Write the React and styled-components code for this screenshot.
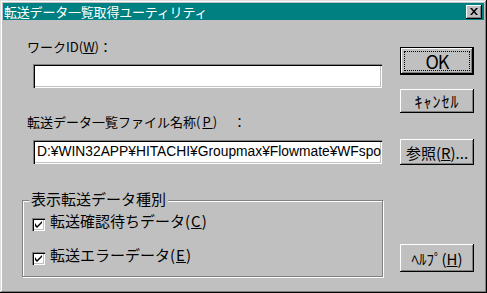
import React from 'react';
import styled, { createGlobalStyle } from 'styled-components';

const Face = '#c0c0c0';
const Shadow = '#808080';
const Teal = '#008080';
const JP = '"Noto Sans CJK JP", "Liberation Sans", sans-serif';

const Global = createGlobalStyle`
  html, body { margin: 0; padding: 0; background: ${Face}; }
  body { font-family: ${JP}; font-size: 13px; color: #000; }
`;

const Window = styled.div`
  width: 487px;
  height: 293px;
  box-sizing: border-box;
  padding: 3px;
  background: ${Face};
  box-shadow: inset -1px -1px #000, inset 1px 1px #dfdfdf, inset -2px -2px ${Shadow}, inset 2px 2px #fff;
  display: flex;
  flex-direction: column;
`;

const TitleBar = styled.div`
  height: 17px;
  background: ${Teal};
  display: flex;
  align-items: center;
  justify-content: space-between;
  padding: 0 2px 0 1px;
`;

const TitleText = styled.span`
  color: #fff;
  font-size: 13px;
  line-height: 17px;
  letter-spacing: -0.2px;
`;

const CloseBox = styled.div`
  width: 16px;
  height: 14px;
  box-sizing: border-box;
  background: ${Face};
  box-shadow: inset -1px -1px #000, inset 1px 1px #fff, inset -2px -2px ${Shadow};
  display: flex;
  align-items: center;
  justify-content: center;
`;

const Body = styled.div`
  display: flex;
  padding-left: 19px;
  gap: 16px;
`;

const LeftCol = styled.div`
  width: 362px;
  display: flex;
  flex-direction: column;
`;

const RightCol = styled.div`
  width: 74px;
  display: flex;
  flex-direction: column;
`;

const Label = styled.div`
  margin: ${p => p.$top}px 0 0 5px;
  line-height: 15px;
  height: 15px;
  white-space: nowrap;
`;

const Paren = styled.span`
  letter-spacing: ${p => p.$sp}px;
  margin-right: ${p => p.$gap || 0}px;
`;

const TextBox = styled.div`
  margin: ${p => p.$top}px 0 0 11px;
  width: 349px;
  height: 24px;
  box-sizing: border-box;
  background: #fff;
  box-shadow: inset 1px 1px ${Shadow}, inset 2px 2px #000, inset -1px -1px #fff, inset -2px -2px ${Face};
  padding: 0 3px 0 4px;
  overflow: hidden;
  white-space: nowrap;
  font-family: "Liberation Sans", Arial, sans-serif;
  font-size: 13.8px;
  line-height: 24px;
`;

const Group = styled.div`
  position: relative;
  margin: ${p => p.$top}px 0 0 0;
  width: 361px;
  height: 77px;
  box-sizing: border-box;
  border: 1px solid ${Shadow};
  box-shadow: inset 1px 1px #fff, 1px 1px #fff;
  padding: 11px 0 0 9px;
  display: flex;
  flex-direction: column;
  font-size: 15px;
`;

const Legend = styled.div`
  position: absolute;
  left: 6px;
  top: -10px;
  padding: 0 2px;
  background: ${Face};
  line-height: 16px;
  height: 16px;
  white-space: nowrap;
`;

const CheckRow = styled.div`
  display: flex;
  align-items: flex-start;
  gap: 5px;
  height: 17px;
  line-height: 17px;
  margin-top: ${p => p.$top}px;
  white-space: nowrap;
`;

const CheckBox = styled.div`
  margin-top: 6px;
  width: 13px;
  height: 13px;
  box-sizing: border-box;
  background: #fff;
  box-shadow: inset 1px 1px ${Shadow}, inset 2px 2px #000, inset -1px -1px #fff, inset -2px -2px ${Face};
  display: flex;
  align-items: center;
  justify-content: center;
`;

const Button = styled.div`
  margin-top: ${p => p.$top}px;
  height: ${p => p.$h}px;
  box-sizing: border-box;
  background: ${Face};
  display: flex;
  align-items: center;
  justify-content: center;
  white-space: nowrap;
  font-size: ${p => p.$size || 15}px;
  letter-spacing: ${p => p.$sp || 0}px;
  box-shadow: ${p => p.$default
    ? `inset -1px -1px #000, inset 1px 1px #000, inset -2px -2px #000, inset 2px 2px #fff, inset -3px -3px ${Shadow}`
    : `inset -1px -1px #000, inset 1px 1px #fff, inset -2px -2px ${Shadow}`};
  position: relative;
`;

const Focus = styled.div`
  position: absolute;
  inset: 4px;
  border: 1px dotted #000;
`;

const Key = styled.span`
  text-decoration: underline;
`;

const Check = () => (
  <svg width="9" height="9" viewBox="0 0 9 9">
    <path d="M1 3v3l2 2l5-5v-2l-5 5z" fill="#000" />
  </svg>
);

export default function App() {
  return (
    <Window>
      <Global />
      <TitleBar>
        <TitleText>転送データ一覧取得ユーティリティ</TitleText>
        <CloseBox>
          <svg width="8" height="7" viewBox="0 0 8 7">
            <path d="M0 0h2l2 2.5l2-2.5h2l-3 3.5l3 3.5h-2l-2-2.5l-2 2.5h-2l3-3.5z" fill="#000" />
          </svg>
        </CloseBox>
      </TitleBar>
      <Body>
        <LeftCol>
          <Label $top={19}>ワークID(<Key>W</Key>)：</Label>
          <TextBox $top={10} />
          <Label $top={26}>
            転送データ一覧ファイル名称<Paren $sp={2} $gap={14}>(<Key>P</Key>)</Paren>：
          </Label>
          <TextBox $top={11}>D:¥WIN32APP¥HITACHI¥Groupmax¥Flowmate¥WFspo</TextBox>
          <Group $top={36}>
            <Legend>表示転送データ種別</Legend>
            <CheckRow $top={0}>
              <CheckBox><Check /></CheckBox>
              <span>転送確認待ちデータ<Paren $sp={1}>(<Key>C</Key>)</Paren></span>
            </CheckRow>
            <CheckRow $top={17}>
              <CheckBox><Check /></CheckBox>
              <span>転送エラーデータ<Paren $sp={1}>(<Key>E</Key>)</Paren></span>
            </CheckRow>
          </Group>
        </LeftCol>
        <RightCol>
          <Button $top={27} $h={28} $default $size={18} $sp={-1}>
            OK
            <Focus />
          </Button>
          <Button $top={14} $h={24} $size={16} $sp={1}>ｷｬﾝｾﾙ</Button>
          <Button $top={26} $h={26}>参照(<Key>R</Key>)...</Button>
          <Button $top={79} $h={28}>ﾍﾙﾌﾟ(<Key>H</Key>)</Button>
        </RightCol>
      </Body>
    </Window>
  );
}
